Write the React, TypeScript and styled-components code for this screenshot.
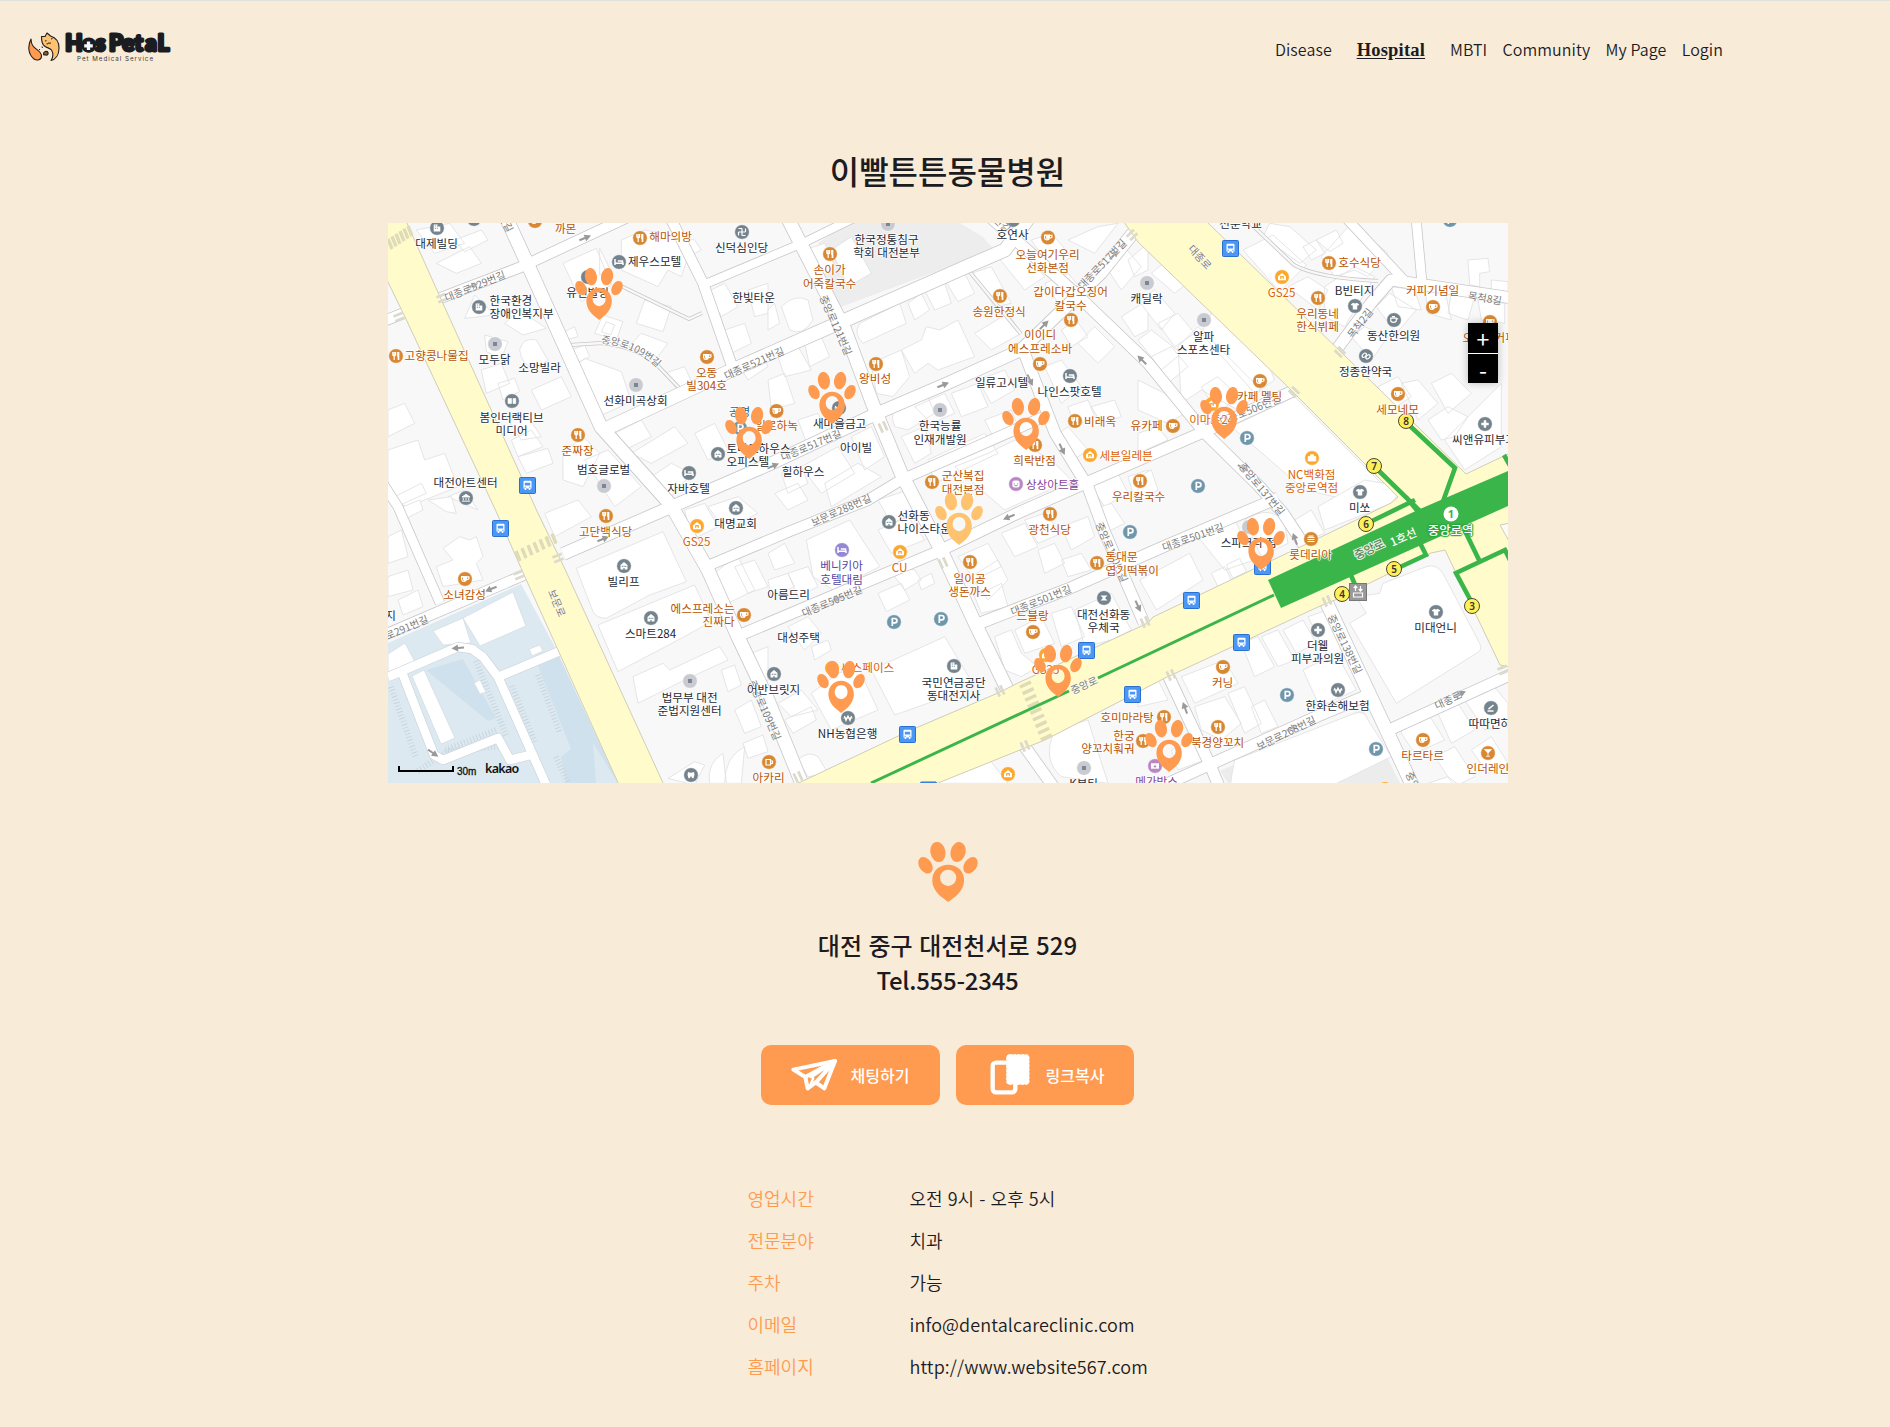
import React from "react";
import styled, { createGlobalStyle, css } from "styled-components";

const KR = `"Noto Sans CJK KR", "Noto Sans", sans-serif`;
const KR_LIGHT = `"Noto Sans CJK KR DemiLight", "Noto Sans CJK KR", "Noto Sans", sans-serif`;

const GlobalStyle = createGlobalStyle`
  * { box-sizing: border-box; }
  html, body { margin: 0; padding: 0; background: #f8ebd8; }
  body { font-family: ${KR}; color: #1c1b1f; overflow-x: hidden; }
`;

/* ---------- page chrome ---------- */

const Page = styled.div`
  min-height: 1427px;
  background: #f8ebd8;
  border-top: 1px solid #e2e0dc;
`;

const Header = styled.header`
  display: flex;
  justify-content: space-between;
  height: 99px;
  padding: 30px 167px 0 28px;
`;

const Nav = styled.nav`
  display: flex;
  align-items: baseline;
  gap: 15.4px;
  height: 40px;
  padding-top: 6px;
`;

const NavLink = styled.a<{ $active?: boolean }>`
  font-family: ${KR_LIGHT};
  font-size: 16px;
  line-height: 24px;
  font-weight: 350;
  letter-spacing: 0.07px;
  white-space: nowrap;
  ${(p) =>
    p.$active &&
    css`
      margin: 0 9.5px;
      font-family: "Liberation Serif", serif;
      font-size: 18.5px;
      font-weight: 700;
      letter-spacing: 0.2px;
      text-decoration: underline;
      text-underline-offset: 2px;
    `}
`;

const Main = styled.main`
  display: flex;
  flex-direction: column;
  align-items: center;
  padding-left: 6px;
`;

const Title = styled.h1`
  margin: 46px 0 0;
  padding-right: 1px;
  font-size: 32px;
  line-height: 48px;
  font-weight: 500;
`;

const MapFrame = styled.section`
  position: relative;
  width: 1120px;
  height: 560px;
  margin-top: 29px;
  overflow: hidden;
  background: #fff;
`;

const MapCanvas = styled.svg`
  display: block;
`;

const PawWrap = styled.div`
  display: flex;
  margin-top: 59px;
  padding-right: 1px;
`;

const Address = styled.p`
  margin: 25px 0 0;
  padding-right: 1px;
  text-align: center;
  font-size: 24px;
  line-height: 35px;
  font-weight: 500;
`;

const Street = styled.span`
  display: block;
  word-spacing: 1.1px;
`;

const Phone = styled.span`
  display: block;
  letter-spacing: -0.25px;
`;

const Actions = styled.div`
  display: flex;
  gap: 16px;
  margin-top: 48px;
  padding-right: 1px;
`;

const ActionButton = styled.button<{ $inset: number }>`
  display: flex;
  align-items: center;
  width: 178.5px;
  height: 60px;
  padding: 0 0 0 ${(p) => p.$inset}px;
  border: 0;
  border-radius: 10px;
  background: #ff9b50;
  color: #fff;
  font-family: ${KR};
  font-size: 16px;
  font-weight: 500;
`;

const ButtonText = styled.span<{ $gap: number }>`
  margin-left: ${(p) => p.$gap}px;
  line-height: 24px;
`;

const InfoList = styled.dl`
  display: grid;
  grid-template-columns: 162px auto;
  grid-auto-rows: 42px;
  align-items: center;
  align-self: flex-start;
  margin: 72px 0 0 741.5px;
  font-family: ${KR_LIGHT};
  font-size: 18px;
  font-weight: 350;
`;

const InfoLabel = styled.dt`
  color: #ff9b50;
`;

const InfoValue = styled.dd<{ $latin: boolean }>`
  margin: 0;
  letter-spacing: ${(p) => (p.$latin ? 0.13 : 0)}px;
  word-spacing: ${(p) => (p.$latin ? 0 : 1.1)}px;
`;

/* ---------- map overlays ---------- */

type Tone = "dark" | "food" | "store" | "violet" | "art" | "teal" | "station";

const toneColor: Record<Tone, string> = {
  dark: "#1d2a34",
  food: "#b95200",
  store: "#dc6200",
  violet: "#5646a6",
  art: "#864399",
  teal: "#2c6577",
  station: "#ffffff",
};

const PlaceLabel = styled.span<{
  $x: number;
  $y: number;
  $tone: Tone;
  $align: "l" | "c" | "r";
}>`
  position: absolute;
  left: ${(p) => p.$x - 0.4}px;
  top: ${(p) => p.$y - 0.2}px;
  transform: translate(${(p) => (p.$align === "l" ? "0" : p.$align === "r" ? "-100%" : "-50%")}, -50%);
  color: ${(p) => toneColor[p.$tone]};
  font-size: ${(p) => (p.$tone === "station" ? 12.4 : 11.6)}px;
  line-height: 13.2px;
  font-weight: ${(p) => (p.$tone === "station" ? 500 : 400)};
  text-align: ${(p) => (p.$align === "l" ? "left" : p.$align === "r" ? "right" : "center")};
  white-space: pre;
  text-shadow: ${(p) =>
    p.$tone === "station"
      ? "0 0 2px #2ba53e, 0 0 2px #2ba53e, 1px 0 1px #2ba53e, -1px 0 1px #2ba53e, 0 1px 1px #2ba53e, 0 -1px 1px #2ba53e"
      : "0 0 1px #fff, 1px 0 1px #fff, -1px 0 1px #fff, 0 1px 1px #fff, 0 -1px 1px #fff"};
`;

const RoadName = styled.span<{ $x: number; $y: number; $turn: number }>`
  position: absolute;
  left: ${(p) => p.$x}px;
  top: ${(p) => p.$y}px;
  transform: translate(-50%, -50%) rotate(${(p) => p.$turn}deg);
  color: #7b7b7b;
  font-size: 10.3px;
  line-height: 12px;
  white-space: pre;
  text-shadow: 0 0 1px #fff, 0 0 2px #fff;
`;

const Marker = styled.span<{ $x: number; $y: number }>`
  position: absolute;
  left: ${(p) => p.$x}px;
  top: ${(p) => p.$y}px;
  display: flex;
`;

const ZoomControl = styled.div`
  position: absolute;
  right: 10px;
  top: 100px;
  display: flex;
  flex-direction: column;
  gap: 1px;
  background: #fff;
  box-shadow: 0 0 8px rgba(0, 0, 0, 0.25);
`;

const ZoomButton = styled.button`
  width: 30px;
  height: 29.5px;
  padding: 2px 0 0;
  border: 0;
  background: #000;
  color: #fff;
  font-family: ${KR};
  font-size: 23px;
  line-height: 27px;
`;

const ScaleBar = styled.div`
  position: absolute;
  left: 10px;
  top: 543px;
  width: 56px;
  height: 6px;
  border: 2px solid #000;
  border-top: 0;
`;

const ScaleText = styled.span`
  position: absolute;
  left: 69px;
  top: 543px;
  font: 400 10px/12px "Liberation Sans", sans-serif;
  color: #111;
  -webkit-text-stroke: 0.3px #111;
`;

const Brand = styled.span`
  position: absolute;
  left: 97px;
  top: 538px;
  font: 600 12.5px/16px "Noto Sans", sans-serif;
  letter-spacing: -0.7px;
  color: #111;
`;

/* ---------- drawings ---------- */

function Paw({ w, h, color = "#ff9b50" }: { w: number; h: number; color?: string }) {
  return (
    <svg width={w} height={h} viewBox="0 0 181 180" preserveAspectRatio="none" fill={color}>
      <ellipse cx="60" cy="30" rx="22.500" ry="30.500" transform="rotate(-12 60 30)" />
      <ellipse cx="121" cy="30" rx="22.500" ry="30.500" transform="rotate(14 121 30)" />
      <ellipse cx="22.500" cy="69.500" rx="19" ry="27" transform="rotate(-34 22.500 69.500)" />
      <ellipse cx="158.500" cy="69.500" rx="19" ry="27" transform="rotate(34 158.500 69.500)" />
      <path
        fillRule="evenodd"
        d="M91 68c27 0 48 19 48 47 0 20-12 36-25 48L91 180 68 163C55 151 43 135 43 115c0-28 21-47 48-47zm0 15a24.500 24.500 0 1 0 0 49 24.500 24.500 0 0 0 0-49z"
      />
    </svg>
  );
}

function Logo() {
  return (
    <svg width="150" height="40" viewBox="28 31 150 40">
      <g stroke="#201d22" strokeWidth="1.100" strokeLinejoin="round">
        <path d="M31 39c-3.500 7-3 15 3 20 3 2 7.500 1 7.500-3 0-5-5.500-6-8.500-10-1.500-2-2-4-2-7z" fill="#ff9b50" />
        <path
          d="M41.500 36.500l3.500 0 2-3.500 3.500 3c5 1.500 8.500 6 8.500 12 0 7-3.500 11.500-8 12.500 2-3 2.500-7 .5-10.500-1.500-2-4.500-2-7-4-3-2-3-6-3-9.500z"
          fill="#ffc26f"
        />
        <path d="M43.500 54c0-2.500 3.500-3.500 4.500-1.500.7 1.700-.8 3-2.300 2.500-1.200.2-2.200 0-2.200-1z" fill="#8a5a3a" />
      </g>
      <path
        d="M45 41l1.500-.3M51 39l1.500-.5M46.500 43.800q1.700.8 2-1 1.500 1.200 2.500 0M39 49l1 1M42 46.500l.5 1.500"
        stroke="#201d22"
        strokeWidth="1"
        fill="none"
      />
      <text
        x="65.300 82.300 95.400 109 122.300 134.600 145.300 157.500"
        y="51.300"
        fontFamily="Lato, sans-serif"
        fontWeight="900"
        fontSize="22.500"
        fill="#1b1b22"
        stroke="#1b1b22"
        strokeWidth="3"
        strokeLinejoin="round"
      >
        HosPetaL
      </text>
      <circle cx="88.500" cy="45.800" r="6.600" fill="#1b1b22" />
      <path d="M88.500 41.500v8.600M84.200 45.800h8.600" stroke="#f4f6fb" strokeWidth="3.300" />
      <text x="77" y="60.500" textLength="76" fontFamily="Inter, sans-serif" fontSize="6.200" fill="#3b393c">
        Pet Medical Service
      </text>
    </svg>
  );
}

function PlaneIcon() {
  return (
    <svg width="50" height="36" viewBox="0 0 150 108" fill="none" stroke="#fff" strokeWidth="12" strokeLinejoin="round" strokeLinecap="round">
      <path d="M10 38L135 12l-32 82-26-18-24 18-7-34z" />
      <path d="M46 60L135 12 80 74 54 92M46 60l82-42M64 58l50-34" />
      <path d="M70 64L62 80" strokeWidth="7" />
    </svg>
  );
}

function CopyIcon() {
  return (
    <svg width="40" height="42" viewBox="0 0 120 126">
      <rect x="8" y="26" width="68" height="89" rx="10" fill="none" stroke="#fff" strokeWidth="13" />
      <rect x="50" y="2" width="67" height="89" rx="8" fill="#fff" stroke="#fff" strokeWidth="3" strokeDasharray="9 3" />
    </svg>
  );
}

type IconKind =
  | "food" | "cafe" | "store" | "bed" | "bedViolet" | "office" | "house" | "dot" | "parking"
  | "bus" | "shirt" | "cross" | "bank" | "mail" | "museum" | "art" | "ticket" | "bag"
  | "burger" | "pen" | "glass" | "pill" | "pot" | "film" | "temple" | "tooth" | "plain" | "beer";

const iconBg: Partial<Record<IconKind, string>> = {
  food: "#d88833", cafe: "#d88833", burger: "#d88833", glass: "#d88833", beer: "#d88833",
  store: "#fca72e", bag: "#fca72e", bedViolet: "#9487d3", parking: "#6f97ac",
  art: "#b888c4", ticket: "#b888c4", dot: "#c9cbd1",
};

function Glyph({ kind }: { kind: IconKind }) {
  const line = { fill: "none", stroke: "#fff", strokeWidth: 1.2 };
  switch (kind) {
    case "food":
      return (
        <g {...line}>
          <path d="M-3.200-4v3q1.400 1.500 2.800 0v-3M-1.800-4v8" />
          <path d="M2.500-4v8M2-4v5" strokeWidth="1.700" />
        </g>
      );
    case "cafe":
      return (
        <g>
          <path d="M-4-3h6v3.500q-.3 2.500-3 2.500t-3-2.500z" fill="#fff" />
          <path d="M2-2.200h1.900v2L2 .8" {...line} />
          <path d="M-2.500-1.500v2q.3 1 1 1" fill="none" stroke="#d88833" strokeWidth=".8" />
        </g>
      );
    case "store":
      return <path fillRule="evenodd" d="M-4-.5L0-4l4 3.500V3.300h-8zM-1.800-1h3.600v3h-1V.5h-1.600V2h-1z" fill="#fff" />;
    case "bed":
    case "bedViolet":
      return <path d="M-4-3v6M-3.500 1.200h7.500V3M-1.200-1H3.500V.8" {...line} strokeWidth={1.5} />;
    case "office":
      return <path fillRule="evenodd" d="M-3.300-3.500h4v2h2.600v5h-6.600zM-2.200-2.400v1h1v-1zm0 2.200v1h1v-1zm2 0v1h1v-1zm0-2.200v1h.8v-1z" fill="#fff" />;
    case "house":
      return <path fillRule="evenodd" d="M-3.500 3.500v-4.500L0-4l3.500 3v4.500zM-2.200-.3v1.200h1v-1.200zm1.800 0v1.200h1v-1.200zm1.700 0v1.200h1v-1.200zM-.6 2v1.500h1.200V2z" fill="#fff" />;
    case "dot":
      return <rect x="-2" y="-2" width="4" height="4" fill="#7b8794" />;
    case "shirt":
      return <path d="M-1.800-3.200Q0-2 1.800-3.200L4.200-1.500 3-.2l-.8-.5V3.500h-4.400V-.7L-3-.2-4.200-1.500z" fill="#fff" />;
    case "cross":
      return <path d="M0-3.700v7.400M-3.700 0h7.400" stroke="#fff" strokeWidth="2.400" />;
    case "bank":
      return <path d="M-3.500-2l1.500 4.500L0-2l2 4.500L3.500-2M-4.500 0h9" {...line} />;
    case "mail":
      return <path d="M-3.500-2.500h7L1 0l2.500 2.500h-7L-1 0z" fill="#fff" />;
    case "museum":
      return <path d="M-4-1L0-3.700 4-1zM-2.700 0v2.500M0 0v2.500M2.700 0v2.500M-4 3.200h8" fill="#fff" stroke="#fff" strokeWidth=".9" />;
    case "temple":
      return <path d="M0-3.500v7M-3.500 0h7M-3.500-3.500H0M3.500-3.500V0M3.500 3.500H0M-3.500 3.500V0" {...line} />;
    case "art":
      return (
        <g>
          <rect x="-3.600" y="-3.600" width="7.200" height="7.200" rx="2" fill="#fff" />
          <path d="M-1.800-1v.8M1.800-1v.8M-2 .8Q0 3 2 .8" stroke="#b888c4" fill="none" />
        </g>
      );
    case "ticket":
      return (
        <g>
          <rect x="-4" y="-2.700" width="8" height="5.400" fill="#fff" />
          <path d="M0-1.700L.7.0 1.800.3.500 1.500-.5 1.500-1.800.3-.7 0z" fill="#b888c4" />
        </g>
      );
    case "bag":
      return <path d="M-3.800-1.500h7.600V3h-7.600zM-1.500-1.500v-1.700h3v1.700" fill="#fff" stroke="#fff" strokeWidth=".8" />;
    case "burger":
      return <path d="M-3.500-1.500h7M-3.500.5h7M-3.500 2.500h7M-2.500-2.800h5" {...line} />;
    case "pen":
      return <path d="M-2.500 1.200L2.500-3M-3.500 3h6" {...line} strokeWidth={1.6} />;
    case "glass":
      return <path d="M-3.500-3.500h7L0 .3zM0 0v3M-2 3.300h4" fill="#fff" stroke="#fff" strokeWidth=".8" />;
    case "pill":
      return (
        <g {...line}>
          <ellipse cx="-1.700" cy="-.8" rx="2.500" ry="1.600" transform="rotate(-45 -1.700 -.8)" />
          <ellipse cx="2" cy=".8" rx="2.500" ry="1.600" transform="rotate(-45 2 .8)" />
        </g>
      );
    case "pot":
      return <path d="M-3.200-1.800h5.400v3q-2.700 2.500-5.400 0zM2.200-.5l2-1M-2-3.300h3" {...line} />;
    case "film":
      return <path d="M-4-2.500h3.500v5H-4zM1-2.500h2.800v5H1z" fill="#fff" stroke="#fff" strokeWidth=".6" />;
    case "tooth":
      return <path d="M-3-3q3 1.500 6 0Q4-1 2.500 3.200H1.300L0 1-1.300 3.200h-1.200Q-4-1-3-3z" fill="#fff" />;
    case "beer":
      return <path d="M-3-2.500h4.500V3H-3zM1.500-1h2v2.500h-2" {...line} />;
    default:
      return null;
  }
}

function PoiIcon({ kind, x, y }: { kind: IconKind; x: number; y: number }) {
  if (kind === "bus") {
    return (
      <g transform={`translate(${x} ${y})`}>
        <rect x="-8" y="-8" width="16" height="16" rx="1" fill="#4a97f5" stroke="#2b6fd0" />
        <path fillRule="evenodd" d="M-4-3.800q0-1 1-1h6q1 0 1 1V3h-1.200v1.500H1.300V3h-2.600v1.500h-1.500V3H-4zM-2.700-2.700V0h5.400v-2.700zM-3 1.300h1.300v.9H-3zm4.700 0H3v.9H1.700z" fill="#fff" />
      </g>
    );
  }
  return (
    <g transform={`translate(${x} ${y})`}>
      <circle r="7.300" fill={iconBg[kind] ?? "#75838d"} stroke="#fff" strokeWidth=".5" />
      {kind === "parking" ? (
        <path d="M-1.700 4v-7.500H.8a2.100 2.100 0 0 1 0 4.300H-1.700" fill="none" stroke="#fff" strokeWidth="1.700" />
      ) : (
        <Glyph kind={kind} />
      )}
    </g>
  );
}

/* ---------- map data ---------- */

const pois: [IconKind, number, number][] = [
  ["office", 49, 5], ["plain", 86, -4], ["cafe", 147, -2], ["food", 252, 15], ["temple", 354, 9],
  ["bed", 231, 39], ["plain", 200, 54], ["office", 91, 84], ["dot", 107, 121], ["food", 8, 133],
  ["film", 124, 178], ["food", 190, 212], ["dot", 248, 162], ["cafe", 319, 134], ["dot", 216, 263],
  ["museum", 78, 275], ["bus", 139.5, 262.5], ["bed", 301, 250], ["house", 348, 285],
  ["parking", 352, 205], ["house", 330, 231], ["cafe", 388.5, 188],
  ["dot", 500, 1], ["food", 442, 31], ["plain", 625, -3], ["cafe", 660, 14.5], ["food", 612, 73],
  ["food", 683, 97], ["cafe", 652, 141], ["food", 488, 141], ["bed", 682, 153], ["dot", 552, 187],
  ["bank", 451, 185], ["food", 687, 198], ["cafe", 785, 203], ["store", 702, 232], ["food", 647, 222],
  ["art", 628, 261], ["food", 544, 259], ["food", 752, 258], ["dot", 759, 60],
  ["bus", 842.5, 25.5], ["store", 894, 54], ["food", 941, 40], ["food", 930, 75], ["shirt", 967, 83],
  ["cafe", 1045, 84], ["pot", 1006, 97], ["pill", 978, 133], ["dot", 816, 97], ["cafe", 872, 158],
  ["store", 824, 181], ["parking", 859, 215], ["cafe", 1010, 171], ["cross", 1097, 201],
  ["bag", 924, 235], ["parking", 810, 263], ["shirt", 972, 269], ["cafe", 1102, 99], ["parking", 1062, -3],
  ["bus", 112.5, 305.5], ["food", 218, 293], ["store", 309, 303], ["cafe", 77, 356], ["house", 236, 343],
  ["house", 263, 395], ["cafe", 356, 392], ["dot", 302, 458], ["tooth", 303, 552], ["beer", 381, 539],
  ["house", 386, 451], ["house", 501, 299], ["bedViolet", 454, 327], ["store", 512, 329],
  ["food", 582, 339], ["food", 662, 291], ["parking", 742, 309], ["food", 709, 340],
  ["parking", 506, 399], ["parking", 553, 396], ["mail", 716, 375], ["cafe", 645, 409],
  ["store", 658, 432], ["bus", 698.5, 427.5], ["office", 566, 443], ["store", 444, 445],
  ["bank", 460, 495], ["bus", 519.5, 511.5], ["bus", 744.5, 471.5], ["store", 620, 551],
  ["bus", 540.5, 567], ["dot", 696, 545], ["food", 776, 494], ["food", 755, 518], ["ticket", 767, 543],
  ["dot", 861, 304], ["bus", 874.5, 343.5], ["burger", 923, 316], ["bus", 803.5, 377.5],
  ["bus", 853.5, 419.5], ["shirt", 1048, 389], ["cross", 930, 407], ["parking", 899, 472],
  ["cafe", 835, 444], ["bank", 950, 467], ["food", 830, 504], ["parking", 988, 526],
  ["cafe", 1035, 517], ["pen", 1103, 485], ["glass", 1100, 530], ["store", 997, 566],
];

const labels: [string, number, number, Tone?, ("l" | "c" | "r")?][] = [
  ["대제빌딩", 49, 21], ["까몬", 178, 6, "food"], ["해마의방", 283, 14, "food"], ["신덕심인당", 354, 25],
  ["제우스모텔", 267, 39], ["유신빌딩", 200, 70], ["한빛타운", 366, 75.5],
  ["한국환경\n장애인복지부", 102, 84, "dark", "l"], ["모두닭", 107, 137], ["소망빌라", 152, 145],
  ["고향콩나물집", 49, 133, "food"], ["봄인터랙티브\n미디어", 124, 201], ["준짜장", 190, 228, "food"],
  ["선화미곡상회", 248, 178], ["오동\n빌304호", 319, 156, "food"], ["범호글로벌", 216, 247.5],
  ["대전아트센터", 78, 260], ["자바호텔", 301, 266], ["대명교회", 348, 301], ["공영", 352, 189, "teal"],
  ["토마토하우스\n오피스텔", 339, 232, "dark", "l"], ["일로하녹", 389, 203, "food"],
  ["한국정통침구\n학회 대전본부", 499, 23], ["손이가\n어죽칼국수", 442, 53.5, "food"], ["호연사", 625, 12.5],
  ["오늘여기우리\n선화본점", 660, 38, "food"], ["송원한정식", 611.5, 89, "food"],
  ["갑이다갑오징어\n칼국수", 683, 75.5, "food"], ["이이디\n에스프레소바", 652.5, 118.5, "food"],
  ["왕비성", 487.5, 156.5, "food"], ["나인스팟호텔", 682, 169], ["일류고시텔", 614, 160.5],
  ["한국능률\n인재개발원", 552.5, 209.5], ["새마을금고", 452, 201], ["아이빌", 468.5, 225],
  ["힐하우스", 415.5, 249], ["비래옥", 712.5, 199, "food"], ["유카페", 759, 203, "food"],
  ["세븐일레븐", 738.5, 233, "store"], ["희락반점", 647, 238, "food"], ["상상아트홀", 665, 262, "art"],
  ["군산복집\n대전본점", 575.5, 259.5, "food"], ["우리칼국수", 751, 274, "food"], ["캐딜락", 759, 76],
  ["전문학교", 853, 1], ["GS25", 894, 70, "store"], ["호수식당", 972, 40, "food"],
  ["우리동네\n한식뷔페", 930, 97, "food"], ["B빈티지", 967, 68], ["커피기념일", 1045, 68.5, "food"],
  ["동산한의원", 1006, 113], ["정종한약국", 978, 149], ["알파\n스포츠센타", 816, 120],
  ["카페 멜팅", 872, 174, "food"], ["이마트24", 824, 197, "store"], ["세모네모", 1010, 187, "food"],
  ["씨앤유피부과", 1064.5, 217, "dark", "l"], ["NC백화점\n중앙로역점", 924, 258, "store"], ["미쏘", 972, 285],
  ["오늘도커피", 1075, 115, "food", "l"], ["고단백식당", 218, 309, "food"], ["GS25", 309, 319, "store"],
  ["소녀감성", 77, 372, "food"], ["빌리프", 236, 359], ["스마트284", 263, 411],
  ["에스프레소는\n진짜다", 347, 392, "food", "r"], ["법무부 대전\n준법지원센터", 302, 481],
  ["아카리", 381, 555, "food"], ["어반브릿지", 386, 467], ["지", 3, 393],
  ["선화동\n나이스타운", 510, 299, "dark", "l"], ["베니키아\n호텔대림", 454, 349.5, "violet"],
  ["CU", 512, 345, "store"], ["일이공\n생돈까스", 582, 362, "food"], ["광천식당", 662, 307, "food"],
  ["동대문\n엽기떡볶이", 718, 340.5, "food", "l"], ["아름드리", 401, 372], ["대성주택", 411, 415],
  ["대전선화동\n우체국", 716, 398], ["드블랑", 645, 393, "food"], ["GS25", 658, 447, "store"],
  ["국민연금공단\n동대전지사", 566, 466], ["씨스페이스", 480, 445, "store"], ["NH농협은행", 460, 511],
  ["K뷰티", 696, 561], ["호미마라탕", 739.5, 495, "food"], ["한궁\n양꼬치훠궈", 747, 519, "food", "r"],
  ["메가박스", 769, 559, "art"], ["스파크라 점", 861, 320], ["롯데리아", 923, 332, "food"],
  ["미대언니", 1048, 405], ["더웰\n피부과의원", 930, 429], ["커닝", 835, 460, "food"],
  ["한화손해보험", 950, 483], ["북경양꼬치", 830, 520, "food"], ["타르타르", 1035, 533, "food"],
  ["따따면하우스", 1081, 501, "dark", "l"], ["인더레인보우", 1079, 546, "food", "l"],
  ["중앙로역", 1063, 308, "station"],
];

const roadNames: [string, number, number, number][] = [
  ["대종로529번길", 87, 63, -22], ["대종로521번길", 366, 140, -24],
  ["중앙로121번길", 448, 102, 66], ["대종로517번길", 423, 222, -23], ["보문로288번길", 453, 287, -24],
  ["대종로517번길", 714, 41, -46], ["대종로", 812, 34, 47], ["목척2길", 972, 100, -52],
  ["목척8길", 1097, 75, 9], ["대종로506번길", 862, 187, -22], ["중앙로137번길", 874, 266, 50],
  ["중앙로130번길", 724, 329, 66], ["대종로505번길", 444, 378, -23], ["대종로501번길", 653, 377, -22],
  ["대종로501번길", 805, 314, -19], ["중앙로", 696, 462, -24], ["보문로", 169, 380, 67],
  ["보문로291번길", 10, 408, -23], ["중앙로109번길", 377, 487, 66], ["중앙로138번길", 957, 421, 64],
  ["보문로268번길", 898, 510, -26], ["대종로", 1060, 477, -25], ["중앙로", 1027, 562, 65],
  ["번길", 118, 0, 62], ["번길", 614, 1, 45],
];

const arrows: [number, number, number][] = [
  [197, 15, -22], [84, 63, -22], [555, 162, -22], [656, 102, -45], [642, 157, 65], [674, 226, 65],
  [754, 137, 225], [621, 294, 158], [215, 316, -22], [103, 366, 158], [70, 425, 175], [45, 530, 35],
  [750, 383, 65], [797, 485, -110], [907, 316, -110], [1072, 471, -25], [385, 243, -22], [450, 375, 158],
  [904, 505, -25], [726, 32, -46], [855, 245, 30],
];

/* White streets: [centre line, width] */
const streets: [string, number][] = [
  ["M117-8L140 42 213 204 283 282 320 347 350 414 380 477 416 566", 13],
  ["M50 76L133 44 240-6", 10],
  ["M-4 98L16 90", 10],
  ["M280-10L315 60 345 146", 10],
  ["M215 207L333 152 453 99 580 43 617 27 640-4", 13],
  ["M315 62L417 19 468-6", 8],
  ["M398-8L457 107 487 187 513 250 553 327 587 400 621 470", 13],
  ["M632 517L667 566", 11],
  ["M175 331L283 284 380 242 490 190 560 160 633 127 713 50 745 10", 12],
  ["M317 344L400 309 480 277 513 257 633 204 664 190", 10],
  ["M634 124L667 210 700 264 717 310 756 400", 11],
  ["M600-8L687 70 760 140 817 210 870 262 895 290 918 325", 11],
  ["M350 413L473 361 547 330 630 290 700 259 760 233 820 207 907 167", 11],
  ["M587 402L680 366 777 323 890 275", 11],
  ["M780 452L823 544 832 566", 11],
  ["M936 374L997 504 1026 566", 13],
  ["M1001 507L1124 451", 11],
  ["M750 574L823 541 930 493 980 472", 11],
  ["M946 130L983 80 1003 57 1124 75", 11],
  ["M958-5L1016 57", 9],
  ["M1028-5L1034 60", 9],
  ["M-4 262L10 284 52 380", 9],
  ["M136 352L-6 413", 10],
];

const footpaths =
  "M182 122L214 120Q250 124 270 143L296 170M233 63L301 96 314 90M581 48L633 111M862 0L906 42Q930 55 990 58";

const lotRoads =
  "M0 454L70 424 84 426 95 434 110 454 160 566M110 454L172 428M15 452L46 532 55 537 110 515 122 537 142 532";

/* Building outlines, drawn at three times the size of the sheet, one list for each sheet. */
const sheets: { x: number; y: number; shapes: string }[] = [
  {
    x: 0, y: -3,
    shapes:
      "M85 30l100-20 45 60-90 30zM145 130l100-50 35 50-75 30zM200 60l80-30 20 30-70 35zM230 295l30-70 60 60zM350 310l45-40 80 55-70 20zM290 345l70 20-20 50-45-20zM395 390q10-40 50-30l35 60-40 25q-40-10-45-55zM280 450l60-20 25 60-70 30zM330 490l50-15 15 40-50 25zM430 510l90-40 30 60-90 40zM360 600l60-10 40 60-60 10zM370 660l60-30 35 50-75 30zM390 710l90-25 15 45-80 30zM525 130l100-45 45 110-90 50zM635 85l30 60-30 20zM700 60l70-30 150 30 20 30-40 20-20 60-40-20-30 50-110-50zM770 240l80 20-25 75-80-25zM620 340l25-55 60 20-20 55zM640 335l15-30 25 10-12 30zM530 335l30-15 10 30-35 10zM550 390l40-15 15 35-40 20zM560 440l30-25 110 40 30 90-110 50zM720 380l40-40 80 30-30 40zM830 460l60-20 25 55-50 10zM680 640l80-40 30 50-70 35zM730 700l130-80 40 50-110 60zM790 770l60-40 60 30-60 70zM920 640l60-30 40 80-60 30zM525 700l60-50 50 50-50 100-60-20zM590 720l70-30 100 110-80 60zM0 570l50-20 30 60-80 40zM0 690l90-30 20 60 60-20 40 100-150 60-60-20zM20 830l80-40 15 30-90 40zM180 830l50-20 40 60zM960 215l50-25 40 70-50 30zM1010 330l60-20 20 60-60 30zM1080 210l60-20v90l-40 10zM1050 430l70-40 20 50-60 40z",
  },
  {
    x: 380, y: -3,
    shapes:
      "M0 270l20-20 15 60-35 20zM40 260q40-40 80-20l15 60q-30 50-70 30zM190 90l60-40 60 110-70 40zM110 90l60-20 30 70-40 30zM275 310l120-60 20 60-130 60q-30-30-10-60zM30 410l60-30 40 70-80 20zM110 370l50-20 25 60-60 30zM310 430l90-40 25 80-50 60-50-10zM400 390l60-30 15-40 40 10 55-30 50 110-110 40-30-20-40 30zM420 250l40-30 25 50-45 30zM470 210l60-20 20 60-50 20zM530 180l60-20 30 60-50 25zM620 340l100-60 40 60-90 50zM610 160l60-20 60 110-50 10zM690 110l60-30 80 90-60 40zM790 60l60-20 60 70-60 40zM900 60l90-40 60-10-70 90zM1080 120l60-50v80l-40 20zM1000 120l60-50 60 70-60 70zM1060 290l80-50v90l-40 20zM930 370l50-50 60 60-50 50zM880 330l45-30 35 50-50 30zM830 190l70-30 60 70-60 60zM380 620q-20-50 20-60l80-30 20 50-80 50zM440 560l90-40 30 60-70 30zM550 520l80-30 30 70-80 30zM630 480l80-30 30 60-70 40zM400 650l70-30 20 80-50 30zM480 720l170-80 40 60-190 90zM650 600l80-30 20 50-70 40zM830 440l50-20 60 80-60 50zM900 560l60-20 20 50-60 30zM970 560l70-20 20 50-60 20zM860 650l40-30 60 70-60 40zM560 740l100-40 80-40 110 60 60 60-200 90zM90 600l60-20 40 80-70 20zM40 760l60-20 20 50-60 30zM100 740l110-60 50 80-100 60zM170 790l100-60 70 40-150 90zM250 650l60-30 40 90-60 40zM20 820l70-30 30 50-60 30zM970 800l80-40 30 60-70 40zM1080 770l60-20v70l-40 20zM0 480l50-20 30 90-70 20z",
  },
  {
    x: 750, y: -3,
    shapes:
      "M315 90l90-45 100 90-80 80zM395 10l60 10 80 70-50 40-110-80zM495 80l40-20 25 40-40 20zM535 60l60-30 20 40-40 25zM640 10l110 90-60 70-40-20-60 20-40-60zM450 200l60-30 60 40-30 60zM560 200l90-60 60 30-90 150-60-30zM715 260l40-40 80 50-60 70zM640 350l40-30 70 30-50 70zM760 200l70 10 20 60-70-10zM860 200l60 10 20 90-70-20zM990 120l60-5 5 40-30 5v40l-30-5zM1060 180l50 5v40l-50-10zM940 220l70 10-20 70-60-20zM1020 240l80 10v60l-70-10zM720 500l60-30 40 60-60 40zM790 490l50-10 60 70-60 50zM880 490l60-30 60 60-70 60zM870 600l60-40 60 30-40 60-40 10zM920 660l170-170v190l-110 70zM0 240l50-30 60 70-40 50zM60 310l60-30 50 60-60 40zM0 360l40-30 90 70-60 50zM120 380l60-60 130 130 60 60-70 60-110-60-60 40zM190 500l50-30 60 60-60 50zM280 620l190-90 290 290q20 20-40 40l-220-50zM170 180l50-40 60 60-60 50zM40 160l60-50 70 60-60 50zM230 260l160 170 20 50-60 40-160-180zM40 410l60-30 50 60-60 50zM0 640l60-20 30 40-90 40zM0 770l40-20 20 60-60 40zM0 480l80 40 60 60-50 30-90-40z",
  },
  {
    x: 0, y: 277,
    shapes:
      "M45 20l50-20 10 30-50 25zM120 0l70-10 15 50-30-5zM165 145l50-35 30 10 20-10 20 60-20 20 20 50-120 20-20-60 50-20zM0 110l40-20 20 80-60 20zM0 230l60-20 15 60-75 20zM30 300l60-30 15 50-60 25zM470 40l100-40 40 50-110 60zM565 205l260-110 70 150-110 40-130 70q-30 0-40-20zM630 375l290-120 50 110-90 50-190 100zM735 530l90-40 20 20 150-70 25 40-130 60-140 70zM970 230q40-40 80-60l50 100-80 40zM1040 200l60-20 40 80-60 20zM890 30l60-20 40 70-80 40zM960 20l90-30 60 50-100 50zM1000 510l40-15 20 60-40 20zM1040 630l50-30 30 80-50 20zM1065 730l60-25 15 50-60 20zM840 835l80-50 30 10-30 60zM965 850q-10-60 40-90l10 90zM1010 850q0-80 60-110l-10 110zM1090 460l50-20v100l-40 10z",
  },
  {
    x: 380, y: 277,
    shapes:
      "M115 120l130-60 90 140-140 70-60-40zM330 90l90-40 50 70-100 40zM60 220l60-20 30 60-60 30zM330 280l70-30 25 50-70 35zM380 230q20-30 60-20l20 30-50 30zM450 240l40-20 10 30-40 20zM60 380l60-30 40 50-50 50zM130 440l50-20 10 30-50 30zM310 510l220-100 90 150-240 85zM130 580l80-60 60-20 60 130-140 60zM30 610l70-40 50 60-80 20zM50 660l80-40 15 40-70 40zM90 780q30-30 60-10l30 50-60 10zM570 170l90-40 40 70-80 40zM610 230l80-50 30 60-60 60zM700 100l70-30 40 70-70 30zM770 60l60-20 50 60-70 30zM880 80l80-30 20 60-70 40zM620 290l80-40 20 70-80 20zM810 150l50-20 30 60-60 30zM880 180l60-20 30 50-70 20zM680 410l50-20 30 70 50 40-50 30-50-20zM740 390l80-40 40 80-90 30zM850 340l60-20 40 90-70 30zM920 330l110-50 60 110-60 30-80 20zM970 30l60-20 40 60-60 30zM860 690l100-30 60 190-140-20q-60-50-20-140zM440 850l210-90 70 90zM0 160l50-30 30 60-60 20zM0 240l60-20 20 40-70 30zM330 0l90-30 50 60-100 40z",
  },
  {
    x: 750, y: 277,
    shapes:
      "M5 240l150-80 40 80-140 90zM180 110l110-50 60 120-90 30zM220 220l40-20 20 40-40 20zM265 195l40-20 20 40-40 20zM320 60q80-50 120 10l10 60-80 40zM470 60l50-30 40 70-50 20zM540 20l140-80 120 20-40 50-200 80zM635 370l50-30-30-50 70-10 10-30 130-50q30-10 50 20l110 210q10 20-10 30l-240 150zM370 410l50-20 50 90-50 20zM435 390l60-30 40 70-60 30zM310 430l50-20 50 90-60 30zM510 350l60-20 60 120-60 20zM495 510l100-50 60 110-110 50zM130 530l130-50 40 70-130 60zM170 620l90-30 50 80-60 50-60-30zM270 580l50-20 50 110-50 30zM340 620l40-20 40 80-50 20zM290 780l360-140q30-10 40 20l70 110-450 220q-60-20-20-210zM790 700q0-30 30-40l50-20 50 80-90 40zM900 640l60-30 50 80-70 40zM980 600l80-50 50 60v60l-70 20zM890 770l60-30 60 90-60 30zM1000 750l60-40 50 80-60 30zM0 560l60-20 30 60-90 20zM100 750l60-30 40 60-80 30zM870 850l60-20 40 30z",
  },
];

const exits: [number, number, number][] = [
  [8, 1018, 198], [7, 986, 243], [6, 978, 301], [5, 1006, 346], [4, 954, 371], [3, 1084, 383],
];

/* Zebra stripes: [first x, first y, count, step x, step y, stripe x, stripe y] */
const crossings: [number, number, number, number, number, number, number][] = [
  [128, 328, 7, 6, -2.9, 4, 10],
  [0, 16, 6, 4, -2.6, 4, 10],
  [632, 464, 9, 2.6, 6.6, 11, -5],
];

const gates: [number, number, number][] = [
  [54, 75, -22], [11, 94, -22], [131, 352, -22], [170, 335, -22], [495, 204, 66], [555, 340, 66], [612, 468, 66],
  [637, 523, 66], [410, 554, 66], [744, 12, -45], [906, 169, 45], [952, 129, 45], [783, 452, 66],
  [757, 399, 66], [939, 378, 66], [1115, 447, -22],
];

const markers: [number, number, boolean?][] = [
  [187, 44.5], [337, 184], [420, 149], [614, 175], [547, 270, true], [812, 164], [849, 294.5], [429, 438],
  [646, 422], [757, 497],
];

function MapDrawing() {
  return (
    <MapCanvas width="1120" height="560" viewBox="0 0 1120 560">
      <rect width="1120" height="560" fill="#f8f8f9" />
      <path d="M440 74L430 20 460 0H572L595 14 606 27 450 85z" fill="#ededee" />
      <path d="M832 548L930 505 975 486 1012 560H840z" fill="#ececec" />
      <path d="M0 420L133 361 167 424 230 560H0z" fill="#dce9f1" />
      <path d="M150 443L171 433 230 560 205 520 208 560H178L173 534 183 526zM38 447L75 436 108 495 100 498z" fill="#cfe1ed" />

      {sheets.map((s, i) => (
        <path
          key={i}
          d={s.shapes}
          transform={`translate(${s.x} ${s.y}) scale(.33333)`}
          fill="#fff"
          stroke="#e1e1e3"
          strokeWidth="2.600"
        />
      ))}
      <g fill="#fff" stroke="#d5dde2" strokeWidth=".8">
        <path d="M45 408L75 395 83 420 55 422zM75 395L125 369 138 403 92 423zM24 453L36 447 67 515 53 521zM0 431L17 420 28 441 0 455zM141 426L152 422 155 428 144 433zM86 460L92 457 98 469 92 471z" />
      </g>
      <g stroke="#c3ced6" strokeWidth="6" fill="none" strokeDasharray=".7 2.600">
        <path d="M88 438L118 512M124 463L147 520M150 452L172 510M3 464L28 534M168 534L180 560M58 527L108 507M30 548L60 528 115 523" />
      </g>

      <g fill="none" strokeLinejoin="round">
        <path d={footpaths} stroke="#c9c9cb" strokeWidth="4" />
        <path d={footpaths} stroke="#f8f8f9" strokeWidth="2.400" />
        {streets.map(([d, w], i) => (
          <path key={i} d={d} stroke="#c8c8ca" strokeWidth={w + 1.6} />
        ))}
        {streets.map(([d, w], i) => (
          <path key={i} d={d} stroke="#fff" strokeWidth={w} />
        ))}
        <path d={lotRoads} stroke="#cfd6db" strokeWidth="10" />
        <path d={lotRoads} stroke="#fff" strokeWidth="8.600" />
      </g>

      <g fill="#fffbcb" stroke="#cfcdb9" strokeWidth="1">
        <path d="M-2-2H18L57 85 148 286 175 342 276 562H231L137 354 107 286 17 94-2 55z" />
        <path d="M736-1H819L853 32 990 165 1078 251 1122 230V444L1112 442 1057 327 1043 330 947 377 930 384 790 449 777 455 657 517 627 529 545 562H406L417 557 523 507 610 470 630 460 760 400 765 394 933 314 1003 280 1010 274 900 164 750 19z" />
      </g>
      <path d="M1122 300L1112 302 1122 320z" fill="#fafafa" stroke="#cfcdb9" />

      <g stroke="#dedbb9" strokeWidth="3.400">
        {crossings.flatMap(([x, y, n, sx, sy, dx, dy], k) =>
          Array.from({ length: n }, (_, i) => (
            <path key={`${k}-${i}`} d={`M${x + i * sx} ${y + i * sy}l${dx} ${dy}`} />
          ))
        )}
      </g>
      {gates.map(([x, y, a], i) => (
        <path key={i} d="M-5-2.500h10M-5 2.500h10" transform={`translate(${x} ${y}) rotate(${a})`} stroke="#dcdacc" strokeWidth="2.800" />
      ))}

      <g fill="none" stroke="#39b54a">
        <path d="M483 560L681 468M710 455L886 372" strokeWidth="2.900" />
        <path
          d="M1022 203L1067 245 1053 284M989 246L1034 290M982 299L1027 277M1018 274L1032 291M1010 345L1038 332 1031 318M962 350L968 364M1084 380L1068 350 1117 327 1124 341M1076 306L1092 339M1116 232L1124 246"
          strokeWidth="4.600"
        />
      </g>
      <path d="M880 357L1032 286 1120 248V283L893 385z" fill="#39b54a" />

      {arrows.map(([x, y, a], i) => (
        <path key={i} d="M-6-1h6v-2.500L6.500 0 0 3.500V1h-6z" transform={`translate(${x} ${y}) rotate(${a})`} fill="#999" />
      ))}
      {pois.map(([kind, x, y], i) => (
        <PoiIcon key={i} kind={kind} x={x} y={y} />
      ))}
      <g transform="translate(970 369)">
        <rect x="-8.500" y="-8.500" width="17" height="17" fill="#999" stroke="#777" />
        <path d="M-4.500 1h9v4h-9zM-2.500-1v-5M-4.300-4l1.800-2 1.800 2M2.500-6v5M.7-3l1.800 2 1.800-2" fill="none" stroke="#fff" strokeWidth="1.200" />
      </g>
      {exits.map(([n, x, y]) => (
        <g key={n}>
          <circle cx={x} cy={y} r="7.500" fill="#fff05a" stroke="#4d4830" strokeWidth="1" />
          <text x={x} y={y + 3.6} textAnchor="middle" fontFamily="Noto Sans" fontWeight="600" fontSize="10" fill="#333">
            {n}
          </text>
        </g>
      ))}
      <circle cx="1063" cy="291" r="7.500" fill="#fff" />
      <text x="1063" y="295" textAnchor="middle" fontFamily="Noto Sans" fontWeight="700" fontSize="11" fill="#39b54a">
        1
      </text>
      <g fontFamily="Noto Sans CJK KR" fontSize="11.500" fontWeight="500" textAnchor="middle">
        <text transform="translate(983 330) rotate(-24)" fill="#59805a" stroke="#e6f3dc" strokeWidth="2" paintOrder="stroke">
          중앙로
        </text>
        <text transform="translate(1017 318) rotate(-24)" fill="#fff">
          1호선
        </text>
      </g>
      <path id="curvedLane" d="M213 120Q248 123 274 149" fill="none" />
      <text fontFamily="Noto Sans CJK KR" fontSize="10" fill="#7b7b7b" stroke="#fff" strokeWidth="1.500" paintOrder="stroke">
        <textPath href="#curvedLane">중앙로109번길</textPath>
      </text>
    </MapCanvas>
  );
}

function HospitalMap() {
  return (
    <MapFrame>
      <MapDrawing />
      {roadNames.map(([text, x, y, turn], i) => (
        <RoadName key={i} $x={x} $y={y} $turn={turn}>
          {text}
        </RoadName>
      ))}
      {labels.map(([text, x, y, tone = "dark", align = "c"], i) => (
        <PlaceLabel key={i} $x={x} $y={y} $tone={tone} $align={align}>
          {text}
        </PlaceLabel>
      ))}
      {markers.map(([x, y, selected], i) => (
        <Marker key={i} $x={x} $y={y}>
          <Paw w={48} h={52} color={selected ? "#ffc26f" : "#ff9b50"} />
        </Marker>
      ))}
      <ZoomControl>
        <ZoomButton>+</ZoomButton>
        <ZoomButton>-</ZoomButton>
      </ZoomControl>
      <ScaleBar />
      <ScaleText>30m</ScaleText>
      <Brand>kakao</Brand>
    </MapFrame>
  );
}

const info: [string, string][] = [
  ["영업시간", "오전 9시 - 오후 5시"],
  ["전문분야", "치과"],
  ["주차", "가능"],
  ["이메일", "info@dentalcareclinic.com"],
  ["홈페이지", "http://www.website567.com"],
];

export default function App() {
  return (
    <Page>
      <GlobalStyle />
      <Header>
        <Logo />
        <Nav>
          <NavLink>Disease</NavLink>
          <NavLink $active>Hospital</NavLink>
          <NavLink>MBTI</NavLink>
          <NavLink>Community</NavLink>
          <NavLink>My Page</NavLink>
          <NavLink>Login</NavLink>
        </Nav>
      </Header>
      <Main>
        <Title>이빨튼튼동물병원</Title>
        <HospitalMap />
        <PawWrap>
          <Paw w={60} h={60} />
        </PawWrap>
        <Address>
          <Street>대전 중구 대전천서로 529</Street>
          <Phone>Tel.555-2345</Phone>
        </Address>
        <Actions>
          <ActionButton $inset={29}>
            <PlaneIcon />
            <ButtonText $gap={10.5}>채팅하기</ButtonText>
          </ActionButton>
          <ActionButton $inset={34}>
            <CopyIcon />
            <ButtonText $gap={16}>링크복사</ButtonText>
          </ActionButton>
        </Actions>
        <InfoList>
          {info.map(([label, value]) => (
            <React.Fragment key={label}>
              <InfoLabel>{label}</InfoLabel>
              <InfoValue $latin={value.includes(".com")}>{value}</InfoValue>
            </React.Fragment>
          ))}
        </InfoList>
      </Main>
    </Page>
  );
}
